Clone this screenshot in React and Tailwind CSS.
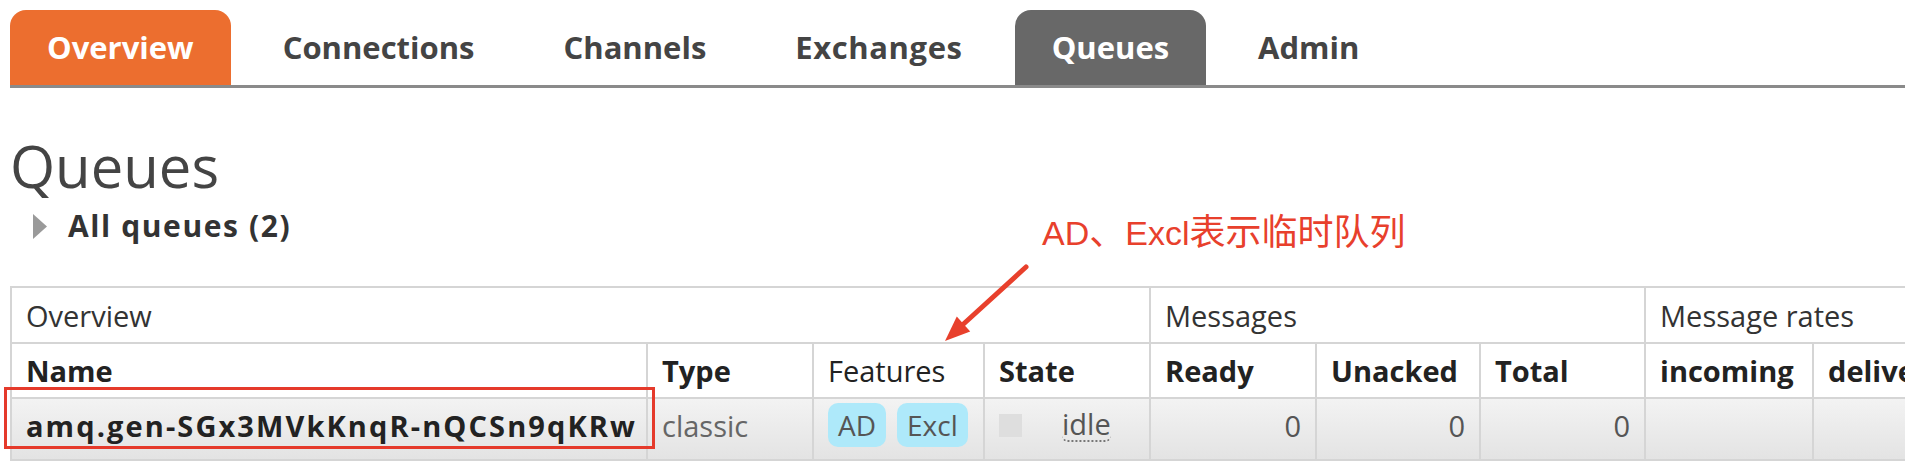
import React from 'react';

const tabs = [
  { name: 'Overview', cls: 'bg-[#ec6e2f] text-white' },
  { name: 'Connections', cls: 'text-[#444]' },
  { name: 'Channels', cls: 'text-[#444]' },
  { name: 'Exchanges', cls: 'text-[#444] tracking-[0.6px]' },
  { name: 'Queues', cls: 'bg-[#686868] text-white' },
  { name: 'Admin', cls: 'text-[#444]' },
];

const cell = 'border-2 border-[#d5d5d5] px-[14px] text-left whitespace-nowrap overflow-hidden';
const dataCell = `${cell} pb-[8px]`;

function Badge({ children }) {
  return (
    <span className="inline-flex items-center h-[44px] px-[10px] rounded-[10px] bg-[#aee9fa] text-[#555] text-[28px]">
      {children}
    </span>
  );
}

export default function App() {
  return (
    <div className="relative w-[1916px] h-[464px] overflow-hidden bg-white font-['Open_Sans',sans-serif] text-[#333]">
      {/* tabs */}
      <nav className="ml-[10px] mr-[11px] pt-[10px] flex border-b-[3px] border-[#8a8a8a]">
        {tabs.map((t) => (
          <div
            key={t.name}
            className={`h-[75px] px-[37px] mr-[15px] flex items-center rounded-t-[16px] text-[31px] font-bold leading-none ${t.cls}`}
          >
            {t.name}
          </div>
        ))}
      </nav>

      <h1 className="mt-[49px] ml-[10px] text-[58px] leading-none font-normal text-[#444]">Queues</h1>

      <div className="mt-[16px] ml-[33px] flex items-center gap-[21px]">
        <svg width="14" height="25" viewBox="0 0 14 25">
          <path d="M0 0 L14 12.5 L0 25 Z" fill="#9a9a9a" />
        </svg>
        <span className="text-[30px] font-bold leading-none text-[#333] tracking-[1.6px]">All queues (2)</span>
      </div>

      {/* table */}
      <div className="mt-[45px] ml-[10px] w-[1895px] overflow-hidden">
        <table className="table-fixed border-collapse w-[1976px] text-[29px] leading-none">
          <colgroup>
            <col className="w-[636px]" />
            <col className="w-[166px]" />
            <col className="w-[171px]" />
            <col className="w-[166px]" />
            <col className="w-[166px]" />
            <col className="w-[164px]" />
            <col className="w-[165px]" />
            <col className="w-[168px]" />
            <col className="w-[174px]" />
          </colgroup>
          <thead>
            <tr className="h-[56px]">
              <th colSpan={4} className={`${cell} font-normal`}>Overview</th>
              <th colSpan={3} className={`${cell} font-normal`}>Messages</th>
              <th colSpan={2} className={`${cell} font-normal`}>Message rates</th>
            </tr>
            <tr className="h-[55px] text-[#222]">
              <th className={`${cell} font-bold`}>Name</th>
              <th className={`${cell} font-bold`}>Type</th>
              <th className={`${cell} font-normal`}>Features</th>
              <th className={`${cell} font-bold`}>State</th>
              <th className={`${cell} font-bold`}>Ready</th>
              <th className={`${cell} font-bold`}>Unacked</th>
              <th className={`${cell} font-bold`}>Total</th>
              <th className={`${cell} font-bold`}>incoming</th>
              <th className={`${cell} font-bold`}>deliver / get</th>
            </tr>
          </thead>
          <tbody>
            <tr className="h-[62px] bg-gradient-to-b from-[#f3f3f3] to-[#e3e3e3]">
              <td className={`${dataCell} font-bold text-[#222] tracking-[2.1px]`}>amq.gen-SGx3MVkKnqR-nQCSn9qKRw</td>
              <td className={`${dataCell} text-[#666]`}>classic</td>
              <td className={dataCell}>
                <div className="flex gap-[11px]">
                  <Badge>AD</Badge>
                  <Badge>Excl</Badge>
                </div>
              </td>
              <td className={dataCell}>
                <div className="flex items-center">
                  <span className="w-[23px] h-[23px] bg-[#dedede]" />
                  <span className="ml-[40px] text-[#555] border-b-2 border-dotted border-[#777] rounded-b-[6px] pb-[2px]">idle</span>
                </div>
              </td>
              <td className={`${dataCell} text-right text-[#555]`}>0</td>
              <td className={`${dataCell} text-right text-[#555]`}>0</td>
              <td className={`${dataCell} text-right text-[#555]`}>0</td>
              <td className={dataCell}></td>
              <td className={dataCell}></td>
            </tr>
          </tbody>
        </table>
      </div>

      {/* annotation */}
      <div className="absolute left-[1042px] top-[215px] text-[#e8402c] font-['Liberation_Sans','Noto_Sans_CJK_SC',sans-serif] leading-none whitespace-nowrap">
        <span className="text-[34px]">AD</span>
        <span className="text-[36px]">、</span>
        <span className="text-[34px]">Excl</span>
        <span className="text-[36px]">表示临时队列</span>
      </div>
      <svg className="absolute left-[930px] top-[255px]" width="110" height="100" viewBox="0 0 110 100">
        <line x1="96" y1="12" x2="33.5" y2="69" stroke="#e8402c" strokeWidth="5" strokeLinecap="round" />
        <path d="M15 86 L40.2 76.4 L26.8 61.6 Z" fill="#e8402c" />
      </svg>
      <div className="absolute left-[4px] top-[387px] w-[651px] h-[62px] border-[3px] border-[#e53a2b]" />
    </div>
  );
}
